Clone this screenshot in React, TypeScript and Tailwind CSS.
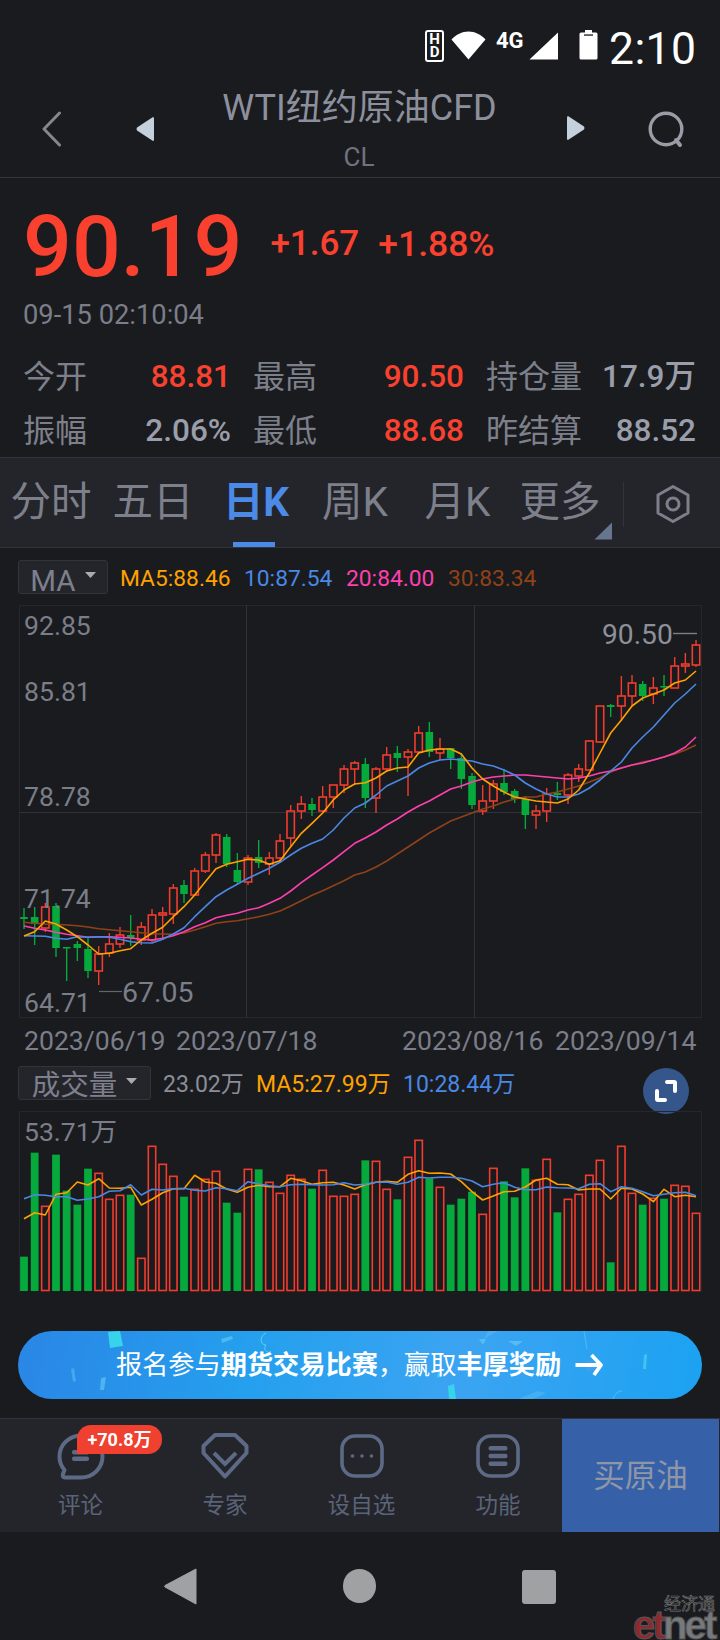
import React from "react";

const RED = "#f23c2e";
const GREEN = "#05a93c";
const ORANGE = "#ffa200";
const BLUE = "#4a88e6";
const PINK = "#ff3fb0";
const BROWN = "#8f4219";

const X = (i: number) => 24 + (10.667 * i);

type C = [string, number, number, number, number];
const candles: C[] = [
  ["g",917,919,908,929],["g",917,924,907,945],["r",907,928,903,932],["g",906,948,903,957],
  ["g",947,948,947,981],["g",944,948,941,961],["g",949,971,938,978],["r",954,971,946,985],
  ["r",944,953,933,957],["r",935,944,927,948],["g",935,938,915,946],["r",927,940,922,945],
  ["r",915,940,909,942],["r",913,915,907,940],["r",888,914,884,924],["g",885,894,880,903],
  ["r",871,895,868,896],["r",855,871,852,873],["r",835,855,833,863],["g",837,864,834,867],
  ["g",870,882,853,884],["r",858,882,855,885],["g",857,863,840,868],["r",858,864,852,875],
  ["r",841,858,834,862],["r",811,838,805,846],["r",804,811,796,819],["g",804,810,798,816],
  ["r",797,811,786,812],["r",785,797,785,808],["r",769,785,765,793],["r",763,769,761,784],
  ["g",764,798,758,808],["r",769,798,767,813],["r",755,769,747,772],["g",753,758,746,772],
  ["r",752,757,749,796],["r",733,752,726,753],["g",732,752,722,757],["r",749,753,738,760],
  ["g",748,758,748,769],["g",758,779,753,789],["g",776,805,773,809],["r",801,811,785,815],
  ["r",784,801,780,809],["g",783,792,769,795],["g",791,799,789,803],["g",799,815,796,829],
  ["r",811,815,805,829],["r",794,811,788,822],["g",793,795,782,800],["r",775,795,773,804],
  ["r",769,776,764,782],["r",741,770,740,770],["r",706,742,706,743],["g",705,707,704,717],
  ["r",696,706,676,721],["r",683,696,675,706],["g",684,696,681,701],["r",688,694,677,704],
  ["g",686,687,675,696],["r",666,688,657,688],["r",664,666,653,673],["r",645,665,640,667],
];

const base = (b: number, a: number[]) => a.map((v) => b + v / 3);

const ma5 = [
  ...base(820,[348,335,303,312,330,350,375,402,400,392,386,360,340,322,290,260,225,185,146,133,125,118,120,133,122,80,40,10]),
  813,800,790,784,782.7,778,771,768,767,753,750,749,749,754,768,779,786,792,797,799,801,802,803,799,790,773,753,733,720,706,698,694,690,683,680,671,
];
const ma10 = [
  ...base(820,[347,348,349,355,358,350,352,350,352,358,365,368,369,358,342,323,290,260,230,210,193,175,160,145,127,105,85,70,57,30]),
  818,808,803,795,786,781,776,768,763,760,759,760,761,764,766,770,775,783,789,794,797,797,794,788,780,771,762,748,737,727,715,703,694,684,
];
const ma20 = [
  ...base(820,[318,325,330,337,343,347,352,350,350,352,354,358,360,355,347,335,320,308,293,286,280,270,263,250,235,213,188,165,143,120,95,70]),
  838,832,825,819,812,806,801,795,789,786,782,779,777,776,775,775,776,777,778,779,778,776,773,771,768,765,763,760,757,753,747,737,
];
const ma30 = [
  ...base(820,[307,310,312,313,315,317,321,326,329,332,335,338,341,342,343,339,330,320,310,305,302,296,290,283,273,258,242,226,212,197,182,165]),
  872,867,861,854,847,840,833,827,821,817,813,809,806,802,799,797,797,794,792,789,786,782,778,772,768,765,762,760,757,754,750,745,
];

const volTop = [
  620,308,469,314,422,464,356,370,448,436,434,625,289,343,379,440,418,388,364,458,488,358,358,397,430,376,388,416,361,439,439,433,
  331,334,418,448,322,271,385,412,464,446,425,493,355,394,442,355,391,328,487,448,433,376,331,637,289,430,464,445,446,406,409,490,
];
const volColor = [
  "g","g","r","g","g","g","g","r","r","r","g","r","r","r","r","g","r","r","r","g","g","r","g","r","r","r","r","g","r","r","r","r",
  "g","r","r","g","r","r","g","r","g","g","g","r","r","g","g","g","r","r","g","r","r","r","r","g","r","r","g","r","g","r","r","r",
];
const volMa5 = [
  506,488,495,433,428,396,405,386,414,415,412,465,448,428,416,416,376,396,400,417,427,412,406,410,410,385,392,403,398,397,405,417,
  404,397,394,397,373,362,370,369,372,395,425,450,438,425,424,411,390,385,403,404,420,417,417,447,415,417,432,455,418,440,436,440,
];
const volMa10 = [
  446,434,436,440,440,451,447,440,424,422,404,435,418,420,416,415,421,423,413,416,422,395,402,407,410,404,403,404,405,404,398,405,
  403,397,396,403,397,382,384,382,382,385,393,410,403,398,412,419,419,411,413,414,416,403,401,425,410,415,425,437,433,428,427,437,
];
const VY = (z: number) => 1050 + z / 3;
const pts = (a: number[]) => a.map((y, i) => `${X(i).toFixed(1)},${y.toFixed(1)}`).join(" ");

function CandleChart() {
  return (
    <svg className="absolute inset-0 w-full h-full" viewBox="19 605 683 413">
      <rect x="19.5" y="605.5" width="682" height="412" fill="none" stroke="#26272c" strokeWidth="1" />
      <line x1="246.5" y1="605" x2="246.5" y2="1018" stroke="#30313a" strokeWidth="1" />
      <line x1="474.5" y1="605" x2="474.5" y2="1018" stroke="#30313a" strokeWidth="1" />
      <line x1="19" y1="812.5" x2="702" y2="812.5" stroke="#30313a" strokeWidth="1" />
      {candles.map(([c, top, bot, hi, lo], i) => {
        const x = X(i);
        const col = c === "r" ? RED : GREEN;
        return (
          <g key={i}>
            <line x1={x} y1={hi} x2={x} y2={top} stroke={col} strokeWidth="1.4" />
            <line x1={x} y1={bot} x2={x} y2={lo} stroke={col} strokeWidth="1.4" />
            {c === "r" ? (
              <rect x={x - 3.7} y={top} width={7.4} height={Math.max(bot - top, 1)} fill="none" stroke={col} strokeWidth="1.6" />
            ) : (
              <rect x={x - 3.8} y={top} width={7.6} height={Math.max(bot - top, 1.5)} fill={col} />
            )}
          </g>
        );
      })}
      <polyline points={pts(ma30)} fill="none" stroke={BROWN} strokeWidth="1.6" strokeLinejoin="round" />
      <polyline points={pts(ma20)} fill="none" stroke={PINK} strokeWidth="1.6" strokeLinejoin="round" />
      <polyline points={pts(ma10)} fill="none" stroke={BLUE} strokeWidth="1.6" strokeLinejoin="round" />
      <polyline points={pts(ma5)} fill="none" stroke={ORANGE} strokeWidth="1.6" strokeLinejoin="round" />
      <line x1="99" y1="991.5" x2="122" y2="991.5" stroke="#62656f" strokeWidth="1.2" />
      <line x1="673" y1="633.5" x2="697" y2="633.5" stroke="#7b7e89" strokeWidth="1.4" />
    </svg>
  );
}

function VolumeChart() {
  return (
    <svg className="absolute inset-0 w-full h-full" viewBox="19 1111 683 181">
      <path d="M19.5 1292 V1111.5 H701.5 V1292" fill="none" stroke="#26272c" strokeWidth="1" />
      {volTop.map((z, i) => {
        const x = X(i);
        const y = VY(z);
        return volColor[i] === "r" ? (
          <rect key={i} x={x - 3.7} y={y} width={7.4} height={1290.5 - y} fill="none" stroke={RED} strokeWidth="1.6" />
        ) : (
          <rect key={i} x={x - 3.9} y={y} width={7.8} height={1291 - y} fill={GREEN} />
        );
      })}
      <polyline points={pts(volMa5.map(VY))} fill="none" stroke={ORANGE} strokeWidth="1.6" strokeLinejoin="round" />
      <polyline points={pts(volMa10.map(VY))} fill="none" stroke={BLUE} strokeWidth="1.6" strokeLinejoin="round" />
    </svg>
  );
}

function StatusBar() {
  return (
    <div className="h-[78px] pt-[30px] flex items-start text-white">
      <div className="ml-[425px] w-[19px] h-[32px] border-2 border-white rounded-[3px] flex flex-col items-center justify-center text-[15px] leading-[13px] font-bold font-['Roboto',sans-serif]">
        <span>H</span>
        <span>D</span>
      </div>
      <svg className="ml-[7px] mt-[1px]" width="35" height="29" viewBox="0 0 35 29">
        <path d="M0.5 8.5 C5 3.5 11 0.5 17.5 0.5 C24 0.5 30 3.5 34.5 8.5 L17.5 28.5 Z" fill="#fff" />
      </svg>
      <span className="ml-[10px] mt-[1px] w-[31px] text-[22px] leading-[19px] font-bold font-['Roboto',sans-serif]">4G</span>
      <svg className="ml-[2px] mt-[2px]" width="30" height="28" viewBox="0 0 30 28">
        <path d="M29 0.5 V27.5 H0.5 Z" fill="#fff" />
      </svg>
      <svg className="ml-[20px]" width="19" height="30" viewBox="0 0 19 30">
        <path d="M6 0 H13 V2.5 H17 Q18.5 2.5 18.5 4 V28 Q18.5 29.5 17 29.5 H2 Q0.5 29.5 0.5 28 V4 Q0.5 2.5 2 2.5 H6 Z" fill="#fff" />
        <rect x="5" y="4.4" width="9" height="1.3" fill="#1a1b1e" />
      </svg>
      <span className="ml-[11px] -mt-[3px] text-[44.5px] leading-[44px] tracking-[0.4px] font-['Roboto',sans-serif]">2:10</span>
    </div>
  );
}

function Header() {
  return (
    <div className="relative h-[100px] border-b border-[#34353b] flex flex-col items-center">
      <div className="mt-[8px] ml-[-1px] text-[36px] leading-[44px] text-[#8c909c]">WTI纽约原油CFD</div>
      <div className="mt-[13px] ml-[-2px] text-[26px] leading-[28px] text-[#70737f]">CL</div>
      <svg className="absolute left-[40px] top-[33px]" width="24" height="36" viewBox="0 0 24 36">
        <path d="M19.5 2 L4 18 L19.5 34" fill="none" stroke="#85878d" strokeWidth="3" strokeLinecap="round" strokeLinejoin="round" />
      </svg>
      <svg className="absolute left-[135px] top-[38px]" width="20" height="26" viewBox="0 0 20 26">
        <path d="M18 1 Q19 1 19 2.5 V23.5 Q19 25 18 25 L2 14.5 Q1 13 2 11.5 Z" fill="#c4d0dc" />
      </svg>
      <svg className="absolute left-[566px] top-[37px]" width="20" height="26" viewBox="0 0 20 26">
        <path d="M2 1 Q1 1 1 2.5 V23.5 Q1 25 2 25 L18 14.5 Q19 13 18 11.5 Z" fill="#c4d0dc" />
      </svg>
      <svg className="absolute left-[647px] top-[33px]" width="38" height="38" viewBox="0 0 38 38">
        <circle cx="19" cy="18" r="15.8" fill="none" stroke="#9a9ca6" strokeWidth="3.4" />
        <path d="M29 29 L33 34" stroke="#9a9ca6" strokeWidth="4" strokeLinecap="round" />
      </svg>
    </div>
  );
}

function Stat({ label, value, red }: { label: string; value: string; red?: boolean }) {
  return (
    <div className="flex justify-between items-center h-[54px]">
      <span className="text-[32px] leading-[40px] text-[#7d808b]">{label}</span>
      <span className={`text-[31.5px] leading-[40px] font-medium ${red ? "text-[#f8412f]" : "text-[#9a9eaa]"}`}>{value}</span>
    </div>
  );
}

function Quote() {
  return (
    <div className="h-[279px] pl-[23px] pr-[24px]">
      <div className="flex items-start h-[121px]">
        <span className="mt-[19px] text-[86px] leading-[100px] font-medium text-[#fa412f]">90.19</span>
        <span className="mt-[46px] ml-[28px] text-[35px] leading-[40px] font-medium text-[#fa412f]">+1.67</span>
        <span className="mt-[46px] ml-[19px] text-[35.5px] leading-[40px] font-medium text-[#fa412f]">+1.88%</span>
      </div>
      <div className="text-[27.3px] leading-[32px] text-[#7b7e89]">09-15 02:10:04</div>
      <div className="mt-[19px] w-[673px] grid grid-cols-[208px_211px_210px] gap-x-[22px]">
        <Stat label="今开" value="88.81" red />
        <Stat label="最高" value="90.50" red />
        <Stat label="持仓量" value="17.9万" />
        <Stat label="振幅" value="2.06%" />
        <Stat label="最低" value="88.68" red />
        <Stat label="昨结算" value="88.52" />
      </div>
    </div>
  );
}

function Tabs() {
  const items = [
    { t: "分时", w: 102 },
    { t: "五日", w: 102 },
    { t: "日K", w: 104, active: true },
    { t: "周K", w: 94 },
    { t: "月K", w: 111 },
    { t: "更多", w: 94 },
  ];
  return (
    <div className="relative h-[91px] bg-[#24252b] border-y border-[#33343b] flex items-center">
      {items.map((it) => (
        <div
          key={it.t}
          style={{ width: it.w }}
          className={`relative h-full flex items-center justify-center text-[40.5px] ${it.active ? "text-[#4c8ae8] font-bold" : "text-[#7d808b]"}`}
        >
          {it.t}
          {it.active ? <span className="absolute bottom-0 left-[29px] w-[42px] h-[5px] bg-[#4c8ae8]" /> : null}
        </div>
      ))}
      <svg className="absolute left-[594px] top-[64px]" width="19" height="18" viewBox="0 0 19 18">
        <path d="M18 0.5 V17.5 H0.5 Z" fill="#66768f" />
      </svg>
      <div className="absolute left-[623px] top-[24px] w-px h-[45px] bg-[#33343b]" />
      <svg className="absolute left-[655px] top-[26px]" width="36" height="40" viewBox="0 0 36 40">
        <path d="M18 2.5 L33 11 V29 L18 37.5 L3 29 V11 Z" fill="none" stroke="#7d808b" strokeWidth="3" strokeLinejoin="round" />
        <circle cx="18" cy="20" r="6" fill="none" stroke="#7d808b" strokeWidth="3" />
      </svg>
    </div>
  );
}

function DropBtn({ label, w, text }: { label: string; w: string; text: string }) {
  return (
    <div className={`${w} h-[34px] flex items-center justify-center gap-[9px] bg-[#24252b] border border-[#33343b] rounded-[3px]`}>
      <span className={`${text} text-[#7d808b]`}>{label}</span>
      <svg className="mb-[5px]" width="11" height="6" viewBox="0 0 11 6">
        <path d="M0 0 H11 L5.5 6 Z" fill="#a8abb4" />
      </svg>
    </div>
  );
}

function Legend() {
  return (
    <div className="h-[57px] pl-[18px] pt-[12px] flex items-start">
      <DropBtn label="MA" w="w-[90px]" text="text-[29.5px] leading-[24px] mt-[8px]" />
      <div className="ml-[12px] mt-[3px] flex text-[22.8px] leading-[32px]">
        <span className="w-[124px] text-[#ffa200]">MA5:88.46</span>
        <span className="w-[102px] text-[#4a88e6]">10:87.54</span>
        <span className="w-[102px] text-[#ff3fb0]">20:84.00</span>
        <span className="text-[#8f4219]">30:83.34</span>
      </div>
    </div>
  );
}

function PriceChart() {
  const lab = "absolute left-[5px] text-[26.6px] leading-[30px] text-[#7b7e89]";
  return (
    <div className="relative ml-[19px] w-[683px] h-[413px]">
      <CandleChart />
      <span className={`${lab} top-[6px]`}>92.85</span>
      <span className={`${lab} top-[72px]`}>85.81</span>
      <span className={`${lab} top-[177px]`}>78.78</span>
      <span className={`${lab} top-[279px]`}>71.74</span>
      <span className={`${lab} top-[383px]`}>64.71</span>
      <span className="absolute left-[583px] top-[14px] text-[28.2px] leading-[32px] text-[#8d909b]">90.50</span>
      <span className="absolute left-[103px] top-[372px] text-[28.5px] leading-[32px] text-[#7b7e89]">67.05</span>
    </div>
  );
}

function Dates() {
  return (
    <div className="h-[48px] pl-[24px] pt-[7px] flex text-[26.6px] leading-[32px] text-[#7b7e89]">
      <span className="w-[152px]">2023/06/19</span>
      <span className="w-[226px]">2023/07/18</span>
      <span className="w-[153px]">2023/08/16</span>
      <span>2023/09/14</span>
    </div>
  );
}

function VolLegend() {
  return (
    <div className="relative h-[45px] pl-[18px] flex items-start">
      <DropBtn label="成交量" w="w-[133px]" text="text-[28.5px] leading-[28px] mt-[6px]" />
      <div className="ml-[12px] mt-[3px] flex text-[23px] leading-[32px]">
        <span className="w-[93px] text-[#8b8e98]">23.02万</span>
        <span className="w-[147px] text-[#ffa200]">MA5:27.99万</span>
        <span className="text-[#4a88e6]">10:28.44万</span>
      </div>
      <div className="absolute left-[643px] top-[2px] w-[46px] h-[46px] rounded-full bg-[#35568a] flex items-center justify-center">
        <svg width="24" height="24" viewBox="0 0 24 24">
          <path d="M3 12 V20 Q3 21 4 21 H11" fill="none" stroke="#fff" strokeWidth="4" strokeLinecap="round" />
          <path d="M13 3 H20 Q21 3 21 4 V12" fill="none" stroke="#fff" strokeWidth="4" strokeLinecap="round" />
        </svg>
      </div>
    </div>
  );
}

function Volume() {
  return (
    <div className="relative ml-[19px] w-[683px] h-[181px]">
      <VolumeChart />
      <span className="absolute left-[5px] top-[6px] text-[26.5px] leading-[30px] text-[#7b7e89]">53.71万</span>
    </div>
  );
}

function Banner() {
  return (
    <div className="relative mt-[39px] ml-[18px] w-[684px] h-[68px] rounded-full overflow-hidden bg-[linear-gradient(100deg,#2a86e6_0%,#25a0ee_35%,#3ba4f2_65%,#1ba2f2_100%)] flex items-center text-white">
      <svg className="absolute inset-0 w-full h-full" viewBox="0 0 684 68">
        <path d="M90 1 L102 0 L105 15 L92 17 Z" fill="#37d3ea" />
        <path d="M203 8 L214 5 L215 8 L204 12 Z" fill="#5ec3f2" opacity="0.7" />
        <path d="M53 38 L56 37 L58 50 L55 51 Z" fill="#5ec3f2" opacity="0.5" />
        <path d="M83 47 L88 46 L86 59 L82 59 Z" fill="#5ec3f2" opacity="0.7" />
        <path d="M248 2 C241 5 242 14 248 14 C244 18 250 24 253 20" fill="none" stroke="#5fd0ef" strokeWidth="1" />
        <path d="M461 8 L468 8 L465 14 Z" fill="#5ec3f2" opacity="0.8" />
        <path d="M490 10 L505 10 L498 15 Z" fill="#5ec3f2" opacity="0.8" />
        <path d="M470 0 L480 0 L466 8 Z" fill="#5ec3f2" opacity="0.4" />
        <path d="M566 0 L569 18" stroke="#7fd0f4" strokeWidth="1" opacity="0.5" />
        <path d="M626 24 L629 23 L628 38 L625 38 Z" fill="#4fd2ef" opacity="0.7" />
        <path d="M430 55 L436 53 L438 68 L431 68 Z" fill="#37d3ea" />
        <path d="M420 40 L423 45 L419 47 Z" fill="#4fd2ef" opacity="0.8" />
        <path d="M520 60 L528 62 L515 68 L500 68 Z" fill="#5ec3f2" opacity="0.4" />
        <path d="M595 68 C597 62 601 60 604 60" fill="none" stroke="#5fd0ef" strokeWidth="1" opacity="0.7" />
        <path d="M570 28 L585 40 L568 40 Z" fill="#4fa0ea" opacity="0.5" />
      </svg>
      <div className="relative ml-[98px] text-[26.2px] leading-[34px] whitespace-nowrap">
        报名参与<span className="font-bold">期货交易比赛</span>，赢取<span className="font-bold">丰厚奖励</span>
      </div>
      <svg className="relative ml-[13px]" width="30" height="24" viewBox="0 0 30 24">
        <path d="M1.5 12 H27 M17.5 2 L27 12 L20 22" fill="none" stroke="#fff" strokeWidth="3.8" strokeLinejoin="round" />
      </svg>
    </div>
  );
}

function NavItem({ label, w, children }: { label: string; w: string; children: React.ReactNode }) {
  return (
    <div className={`relative ${w} h-full flex flex-col items-center`}>
      <div className="mt-[13px] h-[48px] flex items-center justify-center">{children}</div>
      <span className="mt-[10px] text-[22.5px] leading-[30px] text-[#5a6478]">{label}</span>
    </div>
  );
}

function BottomBar() {
  const c = "#5d6a85";
  return (
    <div className="mt-[19px] h-[114px] bg-[#24252b] border-t border-[#33343b] flex">
      <div className="w-[562px] pl-[11px] flex">
        <NavItem label="评论" w="w-[139px]">
          <svg width="48" height="47" viewBox="0 0 48 47">
            <path d="M24 2.5 C36 2.5 45.5 12 45.5 23.5 C45.5 35 36 44.5 24 44.5 H8 Q5 44.5 6 41 L7.5 37 C4 33 2.5 28.5 2.5 23.5 C2.5 12 12 2.5 24 2.5 Z" fill="none" stroke={c} strokeWidth="4" strokeLinejoin="round" />
            <rect x="15" y="17" width="17" height="4.5" rx="2" fill={c} />
            <rect x="15" y="23.5" width="17" height="4.5" rx="2" fill={c} />
          </svg>
          <div className="absolute left-[66px] top-[6px] w-[85px] h-[29px] bg-[#ef4030] rounded-t-[14px] rounded-br-[14px] flex items-center justify-center text-white text-[18px] font-bold">
            +70.8万
          </div>
        </NavItem>
        <NavItem label="专家" w="w-[150px]">
          <svg width="48" height="46" viewBox="0 0 48 46">
            <path d="M14 2 H34 L45.5 13 V20 L24 43.5 L2.5 20 V13 Z" fill="none" stroke={c} strokeWidth="4" strokeLinejoin="round" />
            <path d="M13 20 L24 31 L35 20" fill="none" stroke={c} strokeWidth="4" />
          </svg>
        </NavItem>
        <NavItem label="设自选" w="w-[123px]">
          <svg width="44" height="44" viewBox="0 0 44 44">
            <rect x="2" y="2" width="40" height="40" rx="13" fill="none" stroke={c} strokeWidth="3.6" />
            <circle cx="12.5" cy="22" r="1.8" fill={c} />
            <circle cx="22" cy="22" r="1.8" fill={c} />
            <circle cx="31.5" cy="22" r="1.8" fill={c} />
          </svg>
        </NavItem>
        <NavItem label="功能" w="w-[128px] ml-[11px]">
          <svg width="44" height="44" viewBox="0 0 44 44">
            <rect x="2" y="2" width="40" height="40" rx="13" fill="none" stroke={c} strokeWidth="3.6" />
            <rect x="12.5" y="12" width="19" height="4.4" rx="2" fill={c} />
            <rect x="12.5" y="19.8" width="19" height="4.4" rx="2" fill={c} />
            <rect x="12.5" y="27.5" width="19" height="4.4" rx="2" fill={c} />
          </svg>
        </NavItem>
      </div>
      <div className="w-[157px] pt-[2px] bg-[#3660a8] flex items-center justify-center text-[31.5px] text-[#8f97a6]">买原油</div>
    </div>
  );
}

function SystemNav() {
  return (
    <div className="relative h-[108px]">
      <div className="flex items-start pt-[36px] pl-[164px]">
        <svg width="33" height="37" viewBox="0 0 33 37">
          <path d="M32 1 V36 L1 19 Q0 18.5 1 17.5 Z" fill="#a0a1a3" stroke="#a0a1a3" strokeLinejoin="round" />
        </svg>
        <div className="ml-[146px] mt-[1px] w-[33px] h-[34px] rounded-full bg-[#a0a1a3]" />
        <div className="ml-[146px] mt-[2px] w-[34px] h-[34px] rounded-[3px] bg-[#a0a1a3]" />
      </div>
      <div className="absolute left-[664px] top-[63px] text-[17px] leading-[18px] text-[#1a1b1e] [-webkit-text-stroke:0.6px_#777]">经济通</div>
      <div className="absolute left-[633px] top-[78px] text-[40px] leading-[30px] tracking-[-2.8px] font-bold font-['Liberation_Sans',sans-serif] [-webkit-text-stroke:1px_#555]">
        <span className="text-[#8e2a2f]">et</span>
        <span className="text-[#777a7d]">net</span>
      </div>
    </div>
  );
}

export default function App() {
  return (
    <div className="w-[720px] h-[1640px] overflow-hidden bg-[#1a1b1e] font-['Roboto','Noto_Sans_CJK_SC',sans-serif]">
      <StatusBar />
      <Header />
      <Quote />
      <Tabs />
      <Legend />
      <PriceChart />
      <Dates />
      <VolLegend />
      <Volume />
      <Banner />
      <BottomBar />
      <SystemNav />
    </div>
  );
}
